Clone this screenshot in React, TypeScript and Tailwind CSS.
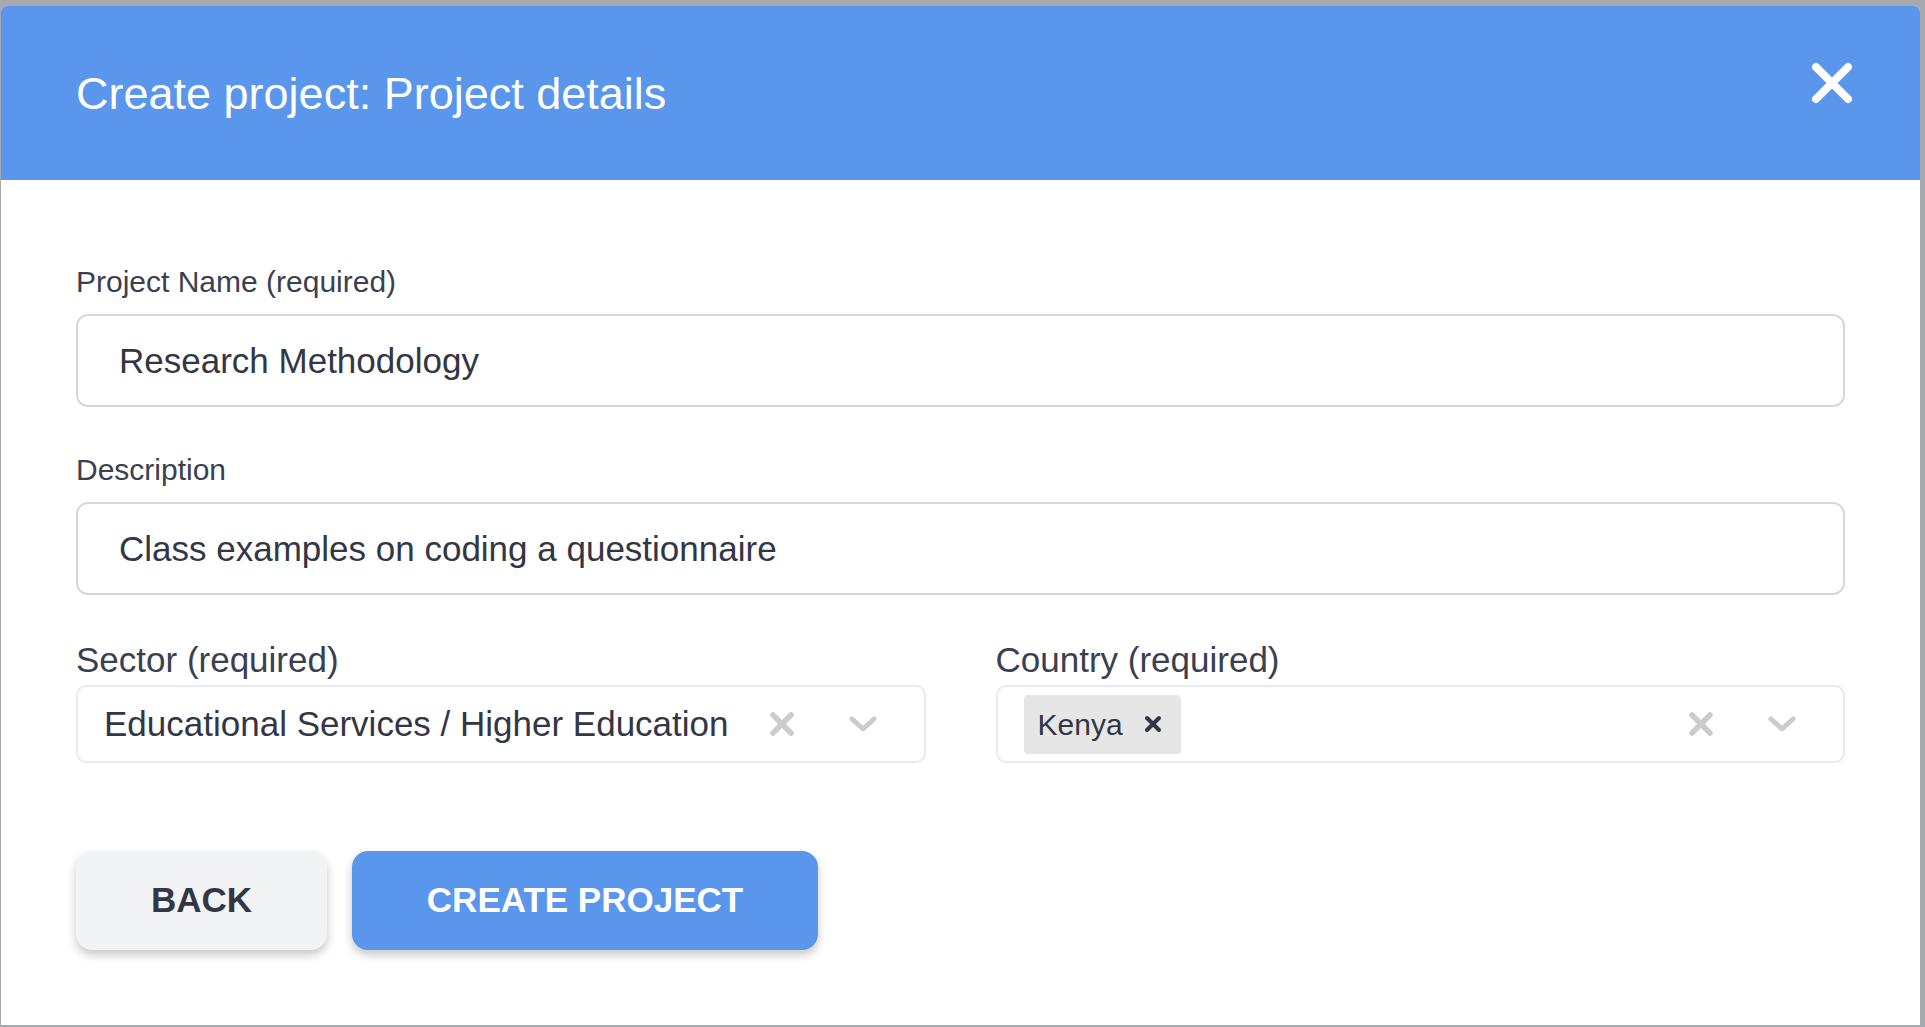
import { useState } from 'react'

const font = { fontFamily: '"Liberation Sans", Arial, sans-serif' }

function CloseIcon() {
  return (
    <svg width="42" height="42" viewBox="0 0 42 42" fill="none">
      <line x1="5" y1="5" x2="37" y2="37" stroke="white" strokeWidth="8" strokeLinecap="round" />
      <line x1="37" y1="5" x2="5" y2="37" stroke="white" strokeWidth="8" strokeLinecap="round" />
    </svg>
  )
}

function ClearIcon() {
  return (
    <svg width="26" height="26" viewBox="0 0 26 26" fill="none">
      <line x1="4" y1="4" x2="22" y2="22" stroke="#cccccc" strokeWidth="5.5" strokeLinecap="round" />
      <line x1="22" y1="4" x2="4" y2="22" stroke="#cccccc" strokeWidth="5.5" strokeLinecap="round" />
    </svg>
  )
}

function ChevronIcon() {
  return (
    <svg width="30" height="20" viewBox="0 0 30 20" fill="none">
      <polyline points="4,5 15,15 26,5" stroke="#cccccc" strokeWidth="5" strokeLinecap="round" strokeLinejoin="round" />
    </svg>
  )
}

function SelectBox({ children }: { children: React.ReactNode }) {
  return (
    <div className="flex items-center h-[78px] border-2 border-[#e9e9ee] rounded-[10px] bg-white pl-[26px] pr-[41px]">
      <div className="flex-1 min-w-0 flex items-center">{children}</div>
      <div className="flex items-center gap-[41px]">
        <div className="w-[40px] flex justify-center"><ClearIcon /></div>
        <div className="w-[40px] flex justify-center"><ChevronIcon /></div>
      </div>
    </div>
  )
}

export default function App() {
  const [name, setName] = useState('Research Methodology')
  const [desc, setDesc] = useState('Class examples on coding a questionnaire')

  return (
    <div className="w-full h-[1027px] bg-[#a8a9ae] pt-[6px] pl-[1px] overflow-hidden" style={font}>
      <div className="w-[1919px] h-[1019px] bg-white rounded-t-[6px] overflow-hidden flex flex-col">
        {/* Header */}
        <div className="h-[174px] bg-[#5a96eb] flex items-center justify-between pl-[75px] pr-[67px] shrink-0">
          <h1 className="text-[45px] text-white leading-none">Create project: Project details</h1>
          <button className="-mt-[20px]"><CloseIcon /></button>
        </div>

        {/* Body */}
        <div className="px-[75px] pt-[85px]">
          <label className="block text-[30px] leading-[34px] text-[#3b4050] mb-[15px]">Project Name (required)</label>
          <input
            value={name}
            onChange={(e) => setName(e.target.value)}
            className="w-full h-[93px] border-2 border-[#d6d8de] rounded-[12px] pl-[41px] text-[35px] text-[#333645] outline-none"
            style={font}
          />

          <label className="block mt-[46px] text-[30px] leading-[34px] text-[#3b4050] mb-[15px]">Description</label>
          <input
            value={desc}
            onChange={(e) => setDesc(e.target.value)}
            className="w-full h-[93px] border-2 border-[#d6d8de] rounded-[12px] pl-[41px] text-[35px] text-[#333645] outline-none"
            style={font}
          />

          <div className="grid grid-cols-2 gap-[70px] mt-[45px]">
            <div>
              <label className="block text-[35px] leading-[40px] text-[#3b4050] mb-[5px]">Sector (required)</label>
              <SelectBox>
                <span className="text-[35px] text-[#333645] whitespace-nowrap">Educational Services / Higher Education</span>
              </SelectBox>
            </div>
            <div>
              <label className="block text-[35px] leading-[40px] text-[#3b4050] mb-[5px]">Country (required)</label>
              <SelectBox>
                <span className="flex items-center h-[59px] bg-[#e6e6e6] rounded-[4px] pl-[14px] pr-[19px] gap-[21px]">
                  <span className="text-[30px] text-[#333645]">Kenya</span>
                  <svg width="18" height="18" viewBox="0 0 18 18" fill="none">
                    <line x1="3" y1="3" x2="15" y2="15" stroke="#333645" strokeWidth="4" strokeLinecap="round" />
                    <line x1="15" y1="3" x2="3" y2="15" stroke="#333645" strokeWidth="4" strokeLinecap="round" />
                  </svg>
                </span>
              </SelectBox>
            </div>
          </div>

          <div className="flex gap-[25px] mt-[88px]">
            <button className="w-[251px] h-[99px] rounded-[16px] bg-[#f2f3f5] text-[35px] font-bold text-[#333645] shadow-[0_5px_10px_rgba(0,0,0,0.22)]">
              BACK
            </button>
            <button className="w-[466px] h-[99px] rounded-[16px] bg-[#5a96eb] text-[35px] font-bold text-white shadow-[0_5px_10px_rgba(0,0,0,0.22)]">
              CREATE PROJECT
            </button>
          </div>
        </div>
      </div>
    </div>
  )
}
